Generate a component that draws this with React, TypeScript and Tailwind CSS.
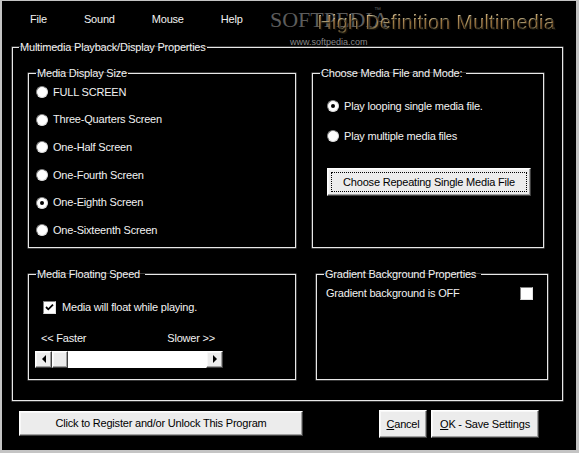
import type { ReactNode } from "react";

const raised =
  "bg-[#ececec] border border-t-white border-l-white border-r-[#404040] border-b-[#404040] shadow-[inset_-1px_-1px_0_#a0a0a0,inset_1px_1px_0_#f8f8f8]";

function GroupBox({
  title,
  className,
  legendClass = "ml-[7px] px-[1px]",
  children,
}: {
  title: string;
  className: string;
  legendClass?: string;
  children?: ReactNode;
}) {
  return (
    <fieldset className={`border border-[#e8e8e8] shadow-[0_0_0_0.5px_#707070] ${className}`}>
      <legend className={legendClass}>{title}</legend>
      {children}
    </fieldset>
  );
}

function Radio({ label, checked = false, row = "h-[27.6px]" }: { label: string; checked?: boolean; row?: string }) {
  return (
    <div className={`flex items-center gap-[5px] ${row}`}>
      <span className="w-[12px] h-[12px] rounded-full bg-white border border-[#808080] border-r-[#dcdcdc] border-b-[#dcdcdc] flex items-center justify-center">
        {checked && <span className="w-[4px] h-[4px] rounded-full bg-black" />}
      </span>
      <span>{label}</span>
    </div>
  );
}

function CheckBox({ checked = false }: { checked?: boolean }) {
  return (
    <span className="w-[13px] h-[13px] bg-white border border-[#808080] border-r-[#e0e0e0] border-b-[#e0e0e0] flex items-center justify-center">
      {checked && (
        <svg width="9" height="9" viewBox="0 0 9 9">
          <path d="M1 4 L3.3 6.3 L8 1.6" stroke="black" strokeWidth="1.8" fill="none" />
        </svg>
      )}
    </span>
  );
}

function Arrow({ left }: { left?: boolean }) {
  return (
    <div className={`w-[17px] h-[17px] flex items-center justify-center ${raised}`}>
      {left ? (
        <span className="w-0 h-0 border-y-[4px] border-y-transparent border-r-[4px] border-r-black" />
      ) : (
        <span className="w-0 h-0 border-y-[4px] border-y-transparent border-l-[4px] border-l-black" />
      )}
    </div>
  );
}

export default function App() {
  const menu = ["File", "Sound", "Mouse", "Help"];
  const sizes = [
    "FULL SCREEN",
    "Three-Quarters Screen",
    "One-Half Screen",
    "One-Fourth Screen",
    "One-Eighth Screen",
    "One-Sixteenth Screen",
  ];

  return (
    <div className="relative w-[579px] h-[453px] overflow-hidden bg-black border-t border-l-2 border-r-[3px] border-b-[3px] border-[#c4c4c4] text-[11px] leading-[13px] tracking-[-0.2px] text-[#f2f2f2] font-['Liberation_Sans',Arial,sans-serif]">
      {/* softpedia watermark */}
      <div className="absolute left-[268px] top-[6px] pointer-events-none text-[#5c5c5c]">
        <div className="font-['Liberation_Serif',serif] text-[22px] leading-[26px] tracking-normal">SOFTPEDIA</div>
        <div className="absolute left-[104px] -top-[1px] text-[7px] leading-[8px]">™</div>
        <div className="ml-[20px] mt-[4px] text-[9px] leading-[10px] tracking-normal text-[#8a8a8a]">www.softpedia.com</div>
      </div>

      <div className="flex h-[40px] items-start">
        <nav className="flex gap-[37px] pl-[28px] pt-[12px]">
          {menu.map((m) => (
            <span key={m}>{m}</span>
          ))}
        </nav>
        <div className="relative ml-auto pr-[21px] pt-[9px] text-[20px] leading-[24px] tracking-[0.2px] bg-gradient-to-b from-[#efe6cc] via-[#bcaa80] to-[#6c5d3c] bg-clip-text text-transparent [text-shadow:1px_1px_0_rgba(30,24,12,0.7)]">
          High Definition Multimedia
        </div>
      </div>

      <GroupBox
        title="Multimedia Playback/Display Properties"
        className="ml-[10px] w-[551px] h-[360px]"
        legendClass="ml-[6px] px-[1px]"
      >
        <div className="flex gap-[16px] pl-[15px] mt-[12.5px]">
          <GroupBox title="Media Display Size" className="w-[268px] h-[181px]">
            <div className="pl-[7px] -mt-[1px]">
              {sizes.map((s) => (
                <Radio key={s} label={s} checked={s === "One-Eighth Screen"} />
              ))}
            </div>
          </GroupBox>

          <GroupBox title="Choose Media File and Mode:" className="w-[232px] h-[181px]" legendClass="ml-[7px] px-[1px] pr-[4px]">
            <div className="pl-[14px] pt-[11.5px]">
              <Radio label="Play looping single media file." checked row="h-[30px]" />
              <Radio label="Play multiple media files" row="h-[30px]" />
              <button className={`mt-[17px] w-[204px] h-[28px] p-[3px] text-black ${raised}`}>
                <span className="flex h-full w-full items-center justify-center border border-dotted border-black">
                  Choose Repeating Single Media File
                </span>
              </button>
            </div>
          </GroupBox>
        </div>

        <div className="flex gap-[20px] pl-[15px] mt-[20px]">
          <GroupBox title="Media Floating Speed" className="w-[268px] h-[112px]" legendClass="ml-[7px] px-[1px] pr-[5px]">
            <div className="pl-[14px] pt-[20px] flex items-center gap-[6px]">
              <CheckBox checked />
              <span>Media will float while playing.</span>
            </div>
            <div className="ml-[12px] mt-[18px] w-[174px] flex justify-between">
              <span>&lt;&lt; Faster</span>
              <span>Slower &gt;&gt;</span>
            </div>
            <div className="ml-[6px] mt-[6px] flex w-[188px] h-[17px] bg-white">
              <Arrow left />
              <div className={`w-[16px] h-[17px] ${raised}`} />
              <div className="flex-1" />
              <Arrow />
            </div>
          </GroupBox>

          <GroupBox title="Gradient Background Properties" className="w-[232px] h-[112px]" legendClass="ml-[7px] px-[1px] pr-[5px]">
            <div className="pl-[9px] pr-[14px] pt-[6px] flex items-center justify-between">
              <span>Gradient background is OFF</span>
              <CheckBox />
            </div>
          </GroupBox>
        </div>
      </GroupBox>

      <div className="flex items-start pl-[17px] mt-[9px] text-black">
        <button className={`mt-[1px] w-[284px] h-[25px] ${raised}`}>Click to Register and/or Unlock This Program</button>
        <button className={`ml-[76px] w-[48px] h-[28px] ${raised}`}>
          <span className="underline underline-offset-1">C</span>ancel
        </button>
        <button className={`ml-[4px] w-[108px] h-[28px] ${raised}`}>
          <span className="underline underline-offset-1">O</span>K - Save Settings
        </button>
      </div>
    </div>
  );
}
